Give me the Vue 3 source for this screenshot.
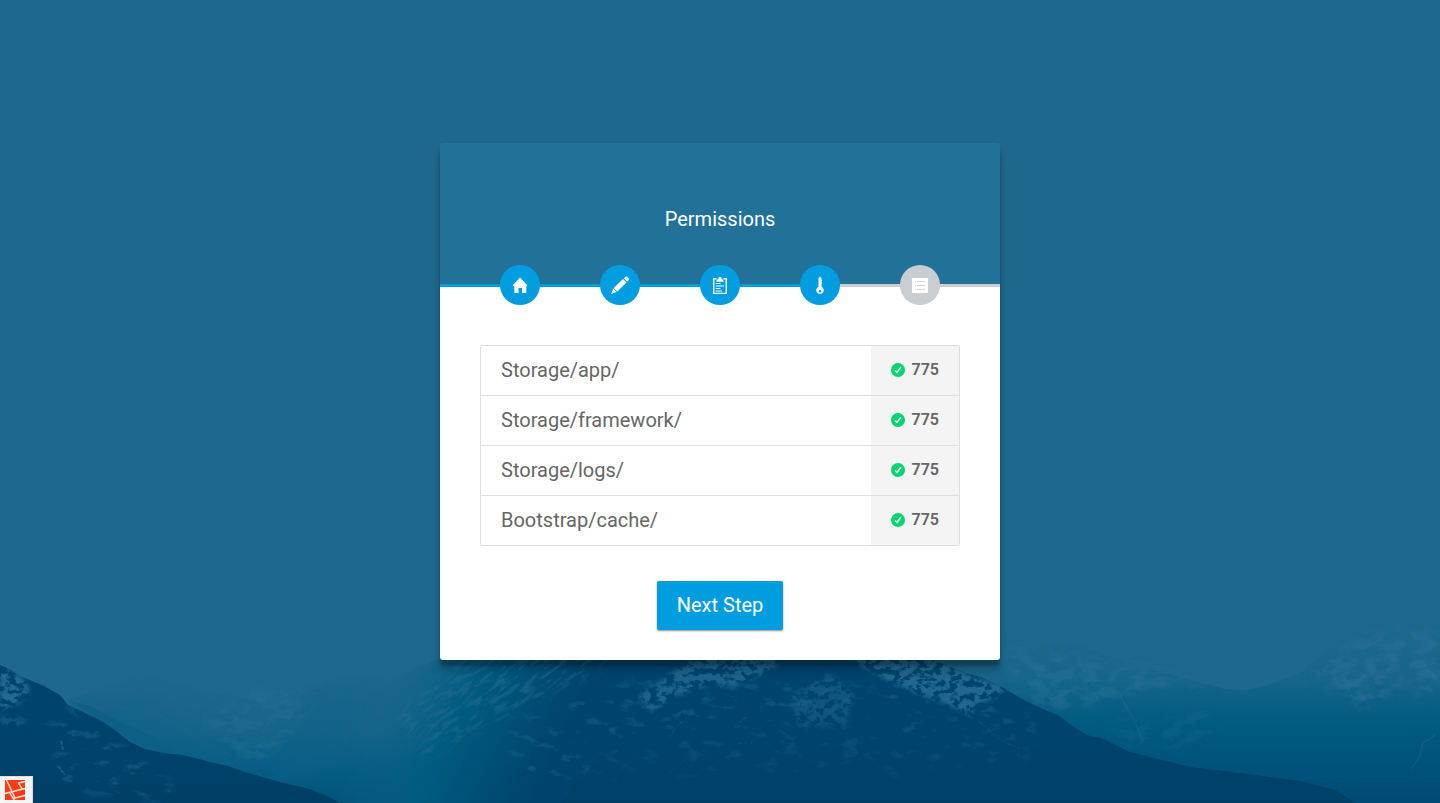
<script setup>
import { computed } from 'vue'

const steps = [
  { name: 'Welcome', icon: 'home', done: true },
  { name: 'Environment', icon: 'pencil', done: true },
  { name: 'Requirements', icon: 'clipboard', done: true },
  { name: 'Permissions', icon: 'key', done: true },
  { name: 'Finished', icon: 'list', done: false },
]

const permissions = [
  { folder: 'Storage/app/', mode: '775' },
  { folder: 'Storage/framework/', mode: '775' },
  { folder: 'Storage/logs/', mode: '775' },
  { folder: 'Bootstrap/cache/', mode: '775' },
]

const progress = computed(() => {
  const done = steps.filter((s) => s.done).length
  return `${Math.round(((done - 0.5) / steps.length) * 100 - 2)}%`
})
</script>

<template>
  <div class="page">
    <svg class="scene" viewBox="0 0 1440 203" aria-hidden="true">
      <defs>
        <linearGradient id="haze" x1="0" y1="0" x2="0" y2="203" gradientUnits="userSpaceOnUse">
          <stop offset="0.15" stop-color="#1f688d" />
          <stop offset="0.38" stop-color="#17658a" />
          <stop offset="0.62" stop-color="#005a82" />
          <stop offset="1" stop-color="#004b76" />
        </linearGradient>
        <linearGradient id="valley" x1="0" y1="60" x2="0" y2="203" gradientUnits="userSpaceOnUse">
          <stop offset="0" stop-color="#1f688d" />
          <stop offset="0.5" stop-color="#186489" />
          <stop offset="0.8" stop-color="#005b84" />
          <stop offset="1" stop-color="#004f79" />
        </linearGradient>
        <linearGradient id="slope" x1="400" y1="70" x2="560" y2="150" gradientUnits="userSpaceOnUse">
          <stop offset="0" stop-color="#14638a" stop-opacity="0.2" />
          <stop offset="0.4" stop-color="#005b82" />
          <stop offset="0.9" stop-color="#00466f" />
          <stop offset="1.000" stop-color="#00446d" />
        </linearGradient>
        <linearGradient id="front" x1="0" y1="60" x2="0" y2="203" gradientUnits="userSpaceOnUse">
          <stop offset="0" stop-color="#00456e" />
          <stop offset="1" stop-color="#004067" />
        </linearGradient>
        <linearGradient id="floor" x1="0" y1="110" x2="0" y2="203" gradientUnits="userSpaceOnUse">
          <stop offset="0" stop-color="#004067" stop-opacity="0" />
          <stop offset="1" stop-color="#004067" stop-opacity="0.9" />
        </linearGradient>
        <filter id="soft" x="-10%" y="-20%" width="120%" height="140%">
          <feGaussianBlur stdDeviation="9" />
        </filter>
        <filter id="streaks" x="-5%" y="-5%" width="110%" height="110%">
          <feGaussianBlur in="SourceGraphic" stdDeviation="6" result="s" />
          <feTurbulence type="fractalNoise" baseFrequency="0.06 0.24" numOctaves="5" seed="5" />
          <feColorMatrix values="0 0 0 0 0  0 0 0 0 0  0 0 0 0 0  6 0 0 0 -2.9" result="n" />
          <feComposite in="s" in2="n" operator="in" />
        </filter>
        <filter id="snow" x="-5%" y="-5%" width="110%" height="110%">
          <feGaussianBlur in="SourceGraphic" stdDeviation="2" result="s" />
          <feTurbulence type="fractalNoise" baseFrequency="0.12 0.16" numOctaves="5" seed="11" />
          <feColorMatrix values="0 0 0 0 0  0 0 0 0 0  0 0 0 0 0  7 0 0 0 -2.8" result="n" />
          <feComposite in="s" in2="n" operator="in" />
        </filter>
        <filter id="mist" x="-10%" y="-10%" width="120%" height="120%">
          <feGaussianBlur in="SourceGraphic" stdDeviation="5" result="s" />
          <feTurbulence type="fractalNoise" baseFrequency="0.06 0.1" numOctaves="5" seed="8" />
          <feColorMatrix values="0 0 0 0 0  0 0 0 0 0  0 0 0 0 0  4 0 0 0 -1.6" result="n" />
          <feComposite in="s" in2="n" operator="in" />
        </filter>
        <filter id="specks" x="-5%" y="-5%" width="110%" height="110%">
          <feGaussianBlur in="SourceGraphic" stdDeviation="5" result="s" />
          <feTurbulence type="fractalNoise" baseFrequency="0.05 0.1" numOctaves="6" seed="3" />
          <feColorMatrix values="0 0 0 0 0  0 0 0 0 0  0 0 0 0 0  6 0 0 0 -3.5" result="n" />
          <feComposite in="s" in2="n" operator="in" />
        </filter>
        <clipPath id="massif">
          <path d="M240 203 L330 130 L400 75 L430 62 L480 40 L640 0 L800 0 L900 45 L960 71 L980 77 L1000 86 L1022 99 L1045 110 L1058 115 L1070 124 L1080 131 L1090 136 L1101 138 L1130 152 L1150 157 L1190 167 L1240 173 L1300 181 L1335 190 L1355 203 Z" />
        </clipPath>
      </defs>

      <!-- distant ranges -->
      <path fill="url(#valley)" d="M40 203 L70 100 L140 72 L200 90 L280 105 L330 80 L390 72 L480 45 L640 30 L640 203 Z" />
      <path fill="#10618a" opacity="0.45" filter="url(#soft)" d="M70 100 L150 108 L250 165 L290 125 L325 95 L370 90 L340 160 L260 203 L130 160 Z" />
      <path fill="url(#haze)" d="M940 203 L940 20 L1020 55 L1060 40 L1140 66 L1190 80 L1225 89 L1245 90 L1262 87 L1300 73 L1322 55 L1345 35 L1385 32 L1402 22 L1440 27 L1440 203 Z" />
      <g fill="#256d93" filter="url(#mist)">
        <path opacity="0.8" d="M1316 66 L1350 42 L1400 28 L1440 34 L1440 90 L1424 105 L1410 82 L1388 94 L1366 110 L1345 97 L1318 84 Z" />
        <path opacity="0.7" d="M1000 50 L1090 55 L1160 70 L1215 88 L1150 88 L1110 100 L1060 110 L1020 95 Z" />
        <path opacity="0.5" d="M200 120 L255 168 L290 135 L320 95 L250 90 Z" />
        <path opacity="0.25" d="M1100 115 L1150 120 L1210 110 L1215 130 L1180 150 L1130 150 Z" />
      </g>
      <path fill="none" stroke="#276d91" opacity="0.5" d="M1120 95 L1127 108 L1135 122 L1143 142 M1436 134 L1422 144 L1420 156 L1411 169" />

      <!-- central mountain -->
      <g clip-path="url(#massif)">
        <path fill="url(#slope)" d="M220 203 L400 75 L480 40 L640 0 L1000 0 L1400 203 Z" />
        <g transform="rotate(-36 480 100)">
          <path fill="#206c90" opacity="0.55" filter="url(#streaks)" d="M400 60 L760 40 L700 120 L600 145 L400 115 Z" />
        </g>
        <path fill="#2a7196" opacity="0.7" filter="url(#snow)" d="M638 96 L690 60 L706 25 L790 50 L774 69 L755 78 L732 87 L714 84 L675 96 L650 112 Z" />
        <path fill="#2a7196" opacity="0.8" filter="url(#snow)" d="M825 40 L900 40 L970 75 L1006 86 L1000 96 L975 106 L972 118 L955 108 L930 98 L898 86 L860 66 Z" />
        <path fill="#21698d" opacity="0.5" filter="url(#snow)" d="M790 95 L830 72 L855 95 L845 128 L798 126 Z" />
        <path fill="#1a668c" opacity="0.45" filter="url(#specks)" d="M500 125 L650 75 L960 90 L1040 115 L1030 160 L910 180 L520 180 Z" />
        <path fill="none" stroke="#1b678e" stroke-dasharray="5 2 2 3" opacity="0.6" d="M692 113 L676 127 L668 140 M747 117 L735 126 M738 143 L752 143 M690 155 L669 174 M870 157 L888 174 M979 121 L1002 141 L1020 149" />
        <path fill="url(#floor)" d="M560 203 L640 110 L1400 110 L1400 203 Z" />
      </g>

      <!-- left foreground ridge -->
      <path fill="#0b5e85" opacity="0.7" d="M70 101 L90 106 L120 122 L150 135 L165 145 L185 156 L160 152 L120 134 Z" />
      <path fill="url(#front)" d="M0 65 L10 69 L20 76 L32 81 L44 86 L60 95 L68 105 L85 113 L98 119 L115 130 L130 142 L145 149 L163 153 L183 155 L195 158 L210 162 L228 166 L245 172 L280 182 L310 189 L325 195 L340 203 L0 203 Z" />
      <path fill="#2a7196" opacity="0.85" filter="url(#snow)" d="M0 64 L24 79 L30 90 L20 103 L0 111 Z" />
      <path fill="#1e698e" opacity="0.5" filter="url(#snow)" d="M0 115 L27 117 L24 127 L0 128 Z M63 102 L75 108 L83 118 L70 112 Z" />
      <path fill="#1c688d" opacity="0.5" filter="url(#specks)" d="M35 120 L90 120 L170 180 L170 203 L60 190 Z" />
      <path fill="none" stroke="#2a7194" stroke-width="2" stroke-dasharray="4 1" d="M61 141 L63 150 M58 166 L65 175" opacity="0.6" />
    </svg>

    <main class="card">
      <header class="card-header">
        <h1>Permissions</h1>
      </header>

      <ol class="steps" :style="{ '--progress': progress }">
        <li v-for="step in steps" :key="step.icon">
          <a href="#" class="step" :class="{ done: step.done }" :aria-label="step.name">
            <svg viewBox="0 0 20 20" width="20" height="20" aria-hidden="true">
              <path v-if="step.icon === 'home'" fill="currentColor" d="M10 2.600 L17.500 10.600 L16.300 11.500 V18 H12 V13 H8.500 V18 H4.300 V11.500 L2.500 10.600 Z" />
              <g v-else-if="step.icon === 'pencil'" fill="currentColor">
                <path d="M13.800 3.300 L15.200 1.900 Q16.500 1 17.700 2.200 L18.600 3.200 Q19.400 4.500 18.400 5.600 L17.200 6.800 Z" />
                <path d="M13 4 L16.500 7.500 L7.300 16.500 L3.700 13 Z" />
                <path d="M3.200 13.600 L6.600 17 L1.200 19 Z" />
              </g>
              <g v-else-if="step.icon === 'clipboard'">
                <path fill="none" stroke="currentColor" stroke-width="1.400" d="M6.500 3.700 H3.700 V18.400 H16.300 V3.700 H13.500" />
                <path fill="currentColor" d="M6.300 6.700 Q6.300 4.300 8.300 4 Q8.400 1.800 10 1.800 Q11.600 1.800 11.700 4 Q13.700 4.300 13.700 6.700 Z" />
                <path stroke="currentColor" stroke-width="1.200" d="M5.700 8.500 H10.500 M5.700 11 H14 M5.700 13.500 H10.500 M5.700 16 H12" />
              </g>
              <path v-else-if="step.icon === 'key'" fill="currentColor" fill-rule="evenodd" d="M8.500 3 Q10 0.800 11.500 3 V5 H12 V6 H11.500 V7.500 H12 V8.500 H11.500 V11.700 Q13.900 13 13.800 15.300 Q13.200 18.800 10 18.900 Q6.800 18.800 6.200 15.300 Q6.100 13 8.500 11.700 Z M10 15 A1.300 1.300 0 1 0 10 17.600 A1.300 1.300 0 1 0 10 15 Z" />
              <g v-else>
                <path fill="currentColor" d="M2 3 H18 V18 H2 Z" />
                <path stroke="#d3d7da" d="M5 6.500 H6 M7 6.500 H15 M5 10.500 H6 M7 10.500 H15 M5 14.500 H6 M7 14.500 H15" />
              </g>
            </svg>
          </a>
        </li>
      </ol>

      <section class="card-body">
        <table aria-label="Folder permissions">
          <tbody>
            <tr v-for="p in permissions" :key="p.folder">
              <th scope="row">{{ p.folder }}</th>
              <td>
                <span class="mode">
                  <svg viewBox="0 0 14 14" width="14" height="14" aria-hidden="true">
                    <circle cx="7" cy="7" r="7" fill="#00d66f" />
                    <path d="M3.900 7.500 L6 9.400 L9.900 4.200" fill="none" stroke="#fff" stroke-width="1.600" />
                  </svg>
                  {{ p.mode }}
                </span>
              </td>
            </tr>
          </tbody>
        </table>
        <button type="button" class="next">Next Step</button>
      </section>
    </main>

    <button type="button" class="debug" aria-label="Open debug bar">
      <svg viewBox="0 0 20 20" width="20" height="20" aria-hidden="true">
        <rect width="20" height="20" fill="#ff3a12" />
        <path d="M1.500 0 L10.500 19 M0 13.500 L20 8.500 M20 1.500 L13.500 3 L17.500 9.500 M5 13 L9 20 M8 18.500 L20 15.500" fill="none" stroke="#ffe9e2" stroke-width="1.400" />
      </svg>
    </button>
  </div>
</template>

<style>
body {
  margin: 0;
}
</style>

<style scoped>
.page {
  position: relative;
  display: flex;
  align-items: center;
  justify-content: center;
  min-height: 100vh;
  overflow: hidden;
  background: #1f688d;
  font-family: Roboto, "Liberation Sans", sans-serif;
}

.scene {
  position: absolute;
  left: 0;
  bottom: 0;
  width: 100%;
}

.card {
  position: relative;
  width: 100%;
  max-width: 560px;
  border-radius: 3px;
  box-shadow: 0 10px 10px rgba(0, 0, 0, 0.19), 0 6px 3px rgba(0, 0, 0, 0.23);
}

.card-header {
  padding: 60px 20px 30px;
  border-radius: 3px 3px 0 0;
  background: #227199;
  text-align: center;
}

h1 {
  margin: 0;
  color: #fff;
  font-size: 20px;
  font-weight: 400;
  line-height: 32px;
}

.steps {
  display: flex;
  margin: 0;
  padding: 0 30px;
  list-style: none;
  background:
    linear-gradient(#009de0, #009de0) 0 19px / var(--progress) 3px no-repeat,
    linear-gradient(#c9ced3, #c9ced3) 0 19px / 100% 3px no-repeat,
    linear-gradient(#227199, #227199) 0 0 / 100% 19px no-repeat,
    #fff;
}

.steps li {
  flex: 1;
  display: flex;
  justify-content: center;
}

.step {
  display: flex;
  align-items: center;
  justify-content: center;
  width: 40px;
  height: 40px;
  border-radius: 50%;
  background: #c9ced3;
  color: #fff;
}

.step.done {
  background: #009de0;
}

.card-body {
  display: flex;
  flex-direction: column;
  align-items: center;
  gap: 35px;
  padding: 40px 40px 30px;
  border-radius: 0 0 3px 3px;
  background: #fff;
}

table {
  width: 100%;
  border: 1px solid #dedede;
  border-radius: 2px;
  border-spacing: 0;
  color: #666;
}

th,
td {
  padding: 12px 20px 13px;
  line-height: 24px;
  text-align: left;
}

th {
  font-size: 20px;
  font-weight: 400;
}

td {
  width: 48px;
  background: #f4f4f4;
  font-size: 16px;
  font-weight: 600;
}

tr + tr th,
tr + tr td {
  border-top: 1px solid #dedede;
}

.mode {
  display: flex;
  align-items: center;
  gap: 7px;
}

.next {
  padding: 12px 20px 13px;
  border: 0;
  border-radius: 2px;
  background: #009de0;
  box-shadow: 0 1px 2px rgba(0, 0, 0, 0.45);
  color: #fff;
  font-family: inherit;
  font-size: 20px;
  line-height: 24px;
  cursor: pointer;
}

.debug {
  position: absolute;
  left: 0;
  bottom: 0;
  display: flex;
  padding: 3px 7px 3px 5px;
  border: solid #ddd;
  border-width: 1px 1px 0 0;
  background: #f5f5f5;
  cursor: pointer;
}
</style>
